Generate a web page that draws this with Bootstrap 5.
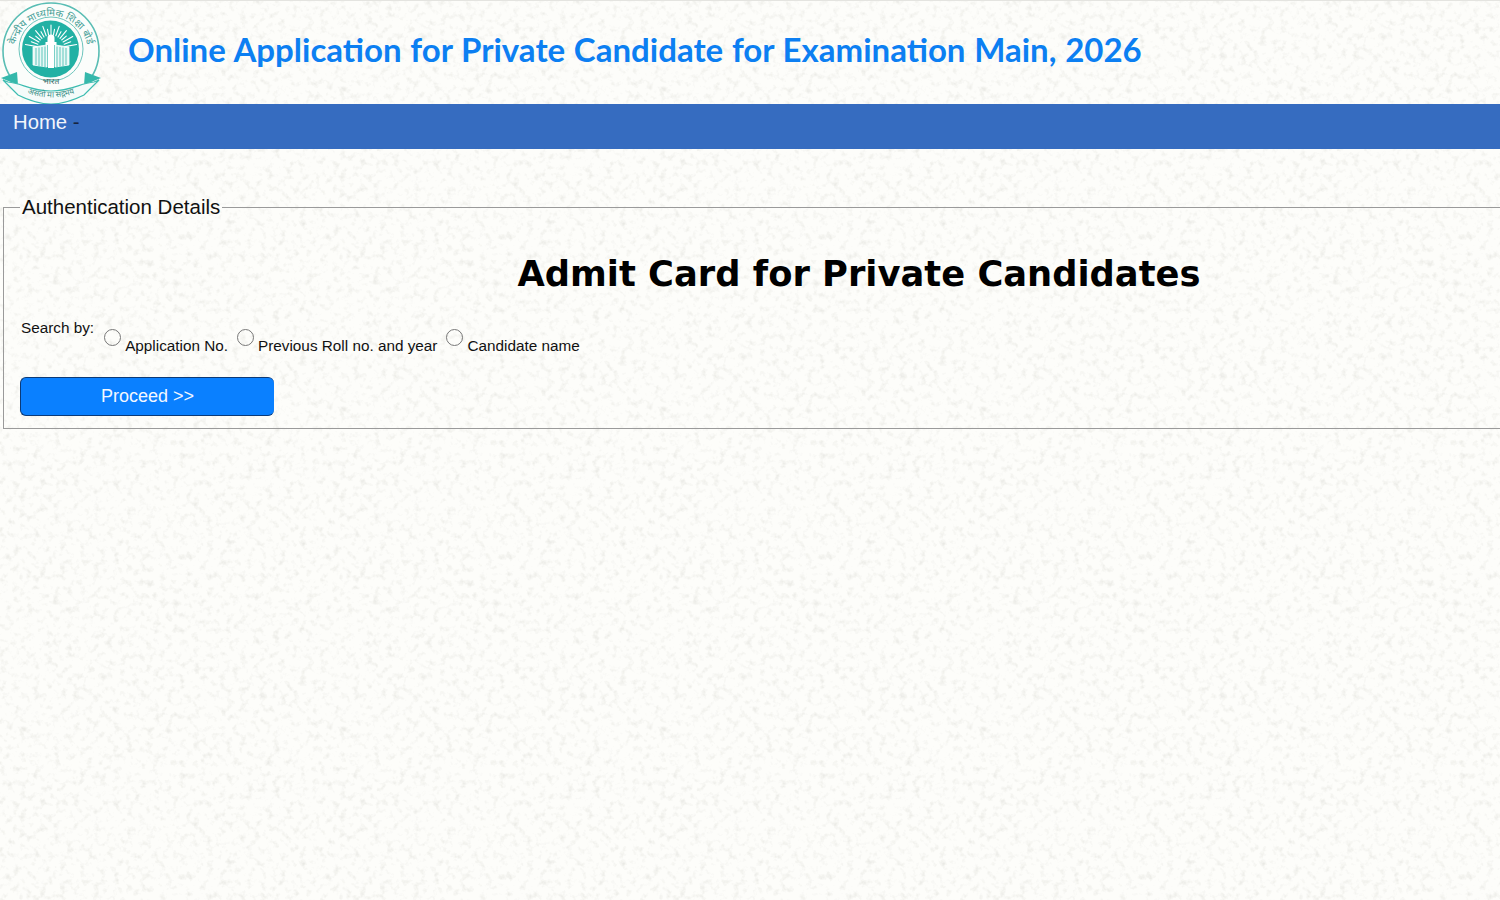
<!DOCTYPE html>
<html lang="en">
<head>
<meta charset="utf-8">
<title>Admit Card for Private Candidates</title>
<link href="https://cdn.jsdelivr.net/npm/bootstrap@5.3.0/dist/css/bootstrap.min.css" rel="stylesheet">
<style>
html,body{overflow-x:hidden}
body{margin:0;min-height:900px;background-color:#fdfdfa;font-family:"Liberation Sans",Arial,sans-serif;color:#000;
background-image:url("data:image/svg+xml,%3Csvg xmlns='http://www.w3.org/2000/svg' width='320' height='320'%3E%3Cfilter id='n' x='0' y='0' width='100%25' height='100%25'%3E%3CfeTurbulence type='fractalNoise' baseFrequency='.15' numOctaves='3' seed='7' stitchTiles='stitch'/%3E%3CfeColorMatrix values='0 0 0 0 .8 0 0 0 0 .8 0 0 0 0 .76 2.1 0 0 0 -1.08'/%3E%3C/filter%3E%3Crect width='320' height='320' filter='url(%23n)'/%3E%3C/svg%3E");}
.top-strip{height:104px;border-top:1px solid #e4e4e0;gap:26px}
.logo-svg{width:102px;height:103px;flex:none}
.app-title{font-family:Lato,"Open Sans",sans-serif;font-weight:700;font-size:33px;word-spacing:.7px;line-height:1;color:#0c7ff2;margin:0 0 7px}
.home-bar{height:45px;background:#366cc0;padding:6px 13px;font-size:20.3px;line-height:24px;color:#16243f}
.home-bar a{color:#f2f5fb;text-decoration:none}
.auth-box{width:1712px;height:234px;margin:46px 0 0 3px;padding:0 17px 12px;border:1px solid #9a9a9a;min-width:0}
.auth-box legend{float:none;width:auto;margin:0 0 0 -1px;padding:0 2px 2px;font-size:20.5px;line-height:23px;color:#111}
.main-head{font-family:"DejaVu Sans",Verdana,sans-serif;font-weight:700;font-size:35.3px;line-height:42px;color:#000;text-align:center;margin:33px 0 22px}
.search-row{font-size:15.3px;line-height:17px;color:#111;height:57px}
.search-lbl{margin-right:10px;padding-top:2px}
.auth-radio{width:17px;height:17px;margin:12px 4px 0 0;background-color:transparent;border:1px solid #777;flex:none}
.opt-lbl{margin:20px 9px 0 0}
.go-btn{display:block;width:254px;height:39px;margin:3px 0 0 -1px;padding:0;font-size:18px;line-height:37px;color:#f2f7ff;background:#0a80ff;border:1px solid #0b3a78;border-right:0;border-radius:6px}
.go-btn:hover{background:#0a80ff;color:#fff}
</style>
</head>
<body>
<header class="top-strip d-flex align-items-center">
<svg class="logo-svg" viewBox="0 0 102 103" aria-label="CBSE logo">
<circle cx="51" cy="50" r="48" fill="#fbfdfb" stroke="#59bdb4" stroke-width="1.6"/>
<circle cx="51" cy="48" r="32" fill="none" stroke="#6dc5bd" stroke-width="1"/>
<path id="arcT" d="M16 64A37 37 0 1 1 86 64" fill="none"/>
<text font-family="'Noto Sans','DejaVu Sans',sans-serif" font-size="10" fill="#47a097" text-anchor="middle"><textPath href="#arcT" startOffset="50%">केन्द्रीय माध्यमिक शिक्षा बोर्ड</textPath></text>
<circle cx="50.500" cy="48" r="28.500" fill="#22b1a4"/>
<text x="51" y="83" font-family="'Noto Sans','DejaVu Sans',sans-serif" font-size="8.500" fill="#4b6f6b" text-anchor="middle">भारत</text>
<path d="M1 77L17 71L18 84Z M101 77L85 71L84 84Z" fill="#35b8ab"/>
<path d="M8 81C22 82 30 90 51 90S80 82 94 81L99 79L84 94C72 100 62 103 51 103S30 100 18 94L3 79Z" fill="#f4fbfa" stroke="#3dbcb0" stroke-width="1.200"/>
<path id="arcB" d="M16 87Q51 106 86 87" fill="none"/>
<text font-family="'Noto Sans','DejaVu Sans',sans-serif" font-size="8" fill="#3c8f87" text-anchor="middle"><textPath href="#arcB" startOffset="50%">असतो मा सद्गमय</textPath></text>
<path stroke="#fff" stroke-width="1.100" stroke-linecap="round" d="M51 34V24M53.400 34.200L54.500 28.300M55.800 34.800L59.200 25.400M58 35.900L61 30.700M60 37.300L66.400 29.600M61.700 39L66.300 35.100M63.100 41L72.700 35.500M64.200 43.200L70.700 40.800M64.800 45.600L76.600 43.500M48.600 34.200L47.500 28.300M46.200 34.800L42.800 25.400M44 35.900L41 30.700M42 37.300L35.600 29.600M40.300 39L35.700 35.100M38.900 41L29.300 35.500M37.800 43.200L31.300 40.800M37.200 45.600L25.400 43.500"/>
<path d="M33 46L47 44V66L33 64ZM55 44L69 46V64L55 66Z" fill="#e9f8f6" stroke="#fff" stroke-width=".8"/>
<path stroke="#22b1a4" stroke-width=".7" d="M36 47V64M39 46.500V65M42 46V65.500M45 45.500V66M57 45.500V66M60 46V65.500M63 46.500V65M66 47V64"/>
<path d="M48 42H54V67H48ZM45.500 41H56.500V44H45.500ZM47.500 37A3.500 3.500 0 0 1 54.500 37V41H47.500Z" fill="#fff"/>
</svg>
<h1 class="app-title">Online Application for Private Candidate for Examination Main, 2026</h1>
</header>
<nav class="home-bar"><a href="#">Home</a> -</nav>
<fieldset class="auth-box">
<legend>Authentication Details</legend>
<h2 class="main-head">Admit Card for Private Candidates</h2>
<form>
<div class="search-row d-flex align-items-start">
<span class="search-lbl">Search by:</span>
<input class="form-check-input auth-radio" type="radio" name="mode" id="m1"><label class="opt-lbl" for="m1">Application No.</label>
<input class="form-check-input auth-radio" type="radio" name="mode" id="m2"><label class="opt-lbl" for="m2">Previous Roll no. and year</label>
<input class="form-check-input auth-radio" type="radio" name="mode" id="m3"><label class="opt-lbl" for="m3">Candidate name</label>
</div>
<button type="button" class="btn btn-primary go-btn">Proceed &gt;&gt;</button>
</form>
</fieldset>
</body>
</html>
